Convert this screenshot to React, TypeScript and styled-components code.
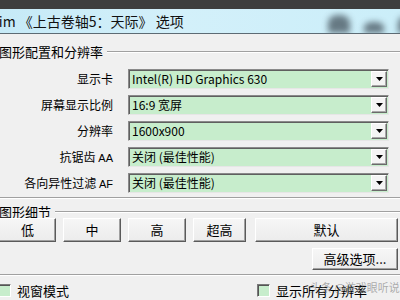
import React from 'react';
import styled, { createGlobalStyle } from 'styled-components';

const GlobalStyle = createGlobalStyle`
  html, body {
    margin: 0;
    padding: 0;
    width: 400px;
    height: 300px;
    overflow: hidden;
    background: #f0f0f0;
  }
  body {
    font-family: "Noto Sans CJK SC", "Liberation Sans", sans-serif;
    font-size: 12px;
    color: #000;
  }
`;

const EYE_GREEN = '#c7edcc';

const Page = styled.div`
  position: relative;
  width: 400px;
  height: 300px;
  overflow: hidden;
  background: #f0f0f0;
`;

const TopStrip = styled.div`
  height: 9px;
  background: #3e3e3e;
`;

const TitleBar = styled.div`
  display: flex;
  align-items: center;
  height: 24px;
  background: linear-gradient(90deg, #c6eaf7 0%, #d3f0fa 45%, #cbeef9 100%);
  border-bottom: 1px solid #5d6b74;
  overflow: hidden;
`;

const TitleText = styled.span`
  margin-left: -30px;
  font-size: 14px;
  line-height: 16px;
  white-space: nowrap;
  color: #111;
`;

const Caption = styled.div`
  display: flex;
  align-items: flex-end;
  gap: 14px;
  margin-left: auto;
  margin-right: -8px;
  height: 100%;
`;

const Blob = styled.div<{ $w: number; $h: number }>`
  width: ${p => p.$w}px;
  height: ${p => p.$h}px;
  background: #44525c;
  border-radius: 45% 45% 10% 10%;
  filter: blur(3px);
  opacity: 0.75;
`;

const Body = styled.div`
  display: flex;
  flex-direction: column;
`;

const Group = styled.section<{ $top: number }>`
  margin-top: ${p => p.$top}px;
  display: flex;
  flex-direction: column;
`;

const Legend = styled.div`
  display: flex;
  align-items: center;
  height: 12px;
`;

const LegendText = styled.span`
  margin-left: -1px;
  padding-right: 4px;
  font-size: 13px;
  line-height: 12px;
  white-space: nowrap;
`;

const EtchLine = styled.div`
  flex: 1;
  height: 0;
  border-top: 1px solid #a0a0a0;
  border-bottom: 1px solid #ffffff;
`;

const GroupBottom = styled(EtchLine)<{ $gap: number }>`
  flex: none;
  margin-top: ${p => p.$gap}px;
`;

const Rows = styled.div`
  display: flex;
  flex-direction: column;
  gap: 6px;
  padding-top: 11px;
`;

const Row = styled.div`
  display: grid;
  grid-template-columns: 113px 261px;
  column-gap: 15px;
  align-items: center;
  height: 20px;
`;

const Label = styled.span`
  text-align: right;
  white-space: nowrap;
  line-height: 14px;
`;

const Small = styled.span`
  font-family: "Liberation Sans", sans-serif;
  font-size: 11px;
`;

const Combo = styled.div`
  display: flex;
  align-items: center;
  box-sizing: border-box;
  height: 20px;
  background: ${EYE_GREEN};
  border: 1px solid;
  border-color: #8a8a8a #e6e6e6 #e6e6e6 #8a8a8a;
  box-shadow: inset 1px 1px 0 #5f5f5f;
`;

const ComboText = styled.span`
  flex: 1;
  padding-left: 3px;
  white-space: nowrap;
  line-height: 14px;
`;

const DropButton = styled.div`
  display: flex;
  align-items: center;
  justify-content: center;
  box-sizing: border-box;
  width: 16px;
  height: 16px;
  margin-right: 1px;
  background: #f4f4f4;
  border: 1px solid;
  border-color: #ffffff #6a6a6a #6a6a6a #ffffff;
  box-shadow: inset -1px -1px 0 #a8a8a8;
`;

const ButtonRow = styled.div`
  display: flex;
  gap: 7px;
  margin-left: -1px;
`;

const PushButton = styled.button<{ $w: number; $h?: number; $ml?: number }>`
  box-sizing: border-box;
  width: ${p => p.$w}px;
  height: ${p => p.$h ?? 24}px;
  margin: 0 0 0 ${p => p.$ml ?? 0}px;
  padding: 0;
  flex: none;
  font-family: "Noto Sans CJK SC", "Liberation Sans", sans-serif;
  font-size: 13px;
  line-height: 14px;
  color: #000;
  background: linear-gradient(#f6f6f6, #ececec);
  border: 1px solid;
  border-color: #ffffff #5a5a5a #5a5a5a #ffffff;
  box-shadow: inset -1px -1px 0 #a0a0a0;
`;

const RightRow = styled.div`
  display: flex;
  justify-content: flex-end;
  padding-right: 2px;
  margin-top: 6px;
`;

const CheckRow = styled.div`
  display: grid;
  grid-template-columns: 259px 1fr;
  margin-top: 7px;
  margin-left: -2px;
`;

const CheckItem = styled.label`
  display: flex;
  align-items: center;
  gap: 6px;
  height: 14px;
  font-size: 13px;
  white-space: nowrap;
`;

const CheckBox = styled.span`
  box-sizing: border-box;
  width: 13px;
  height: 13px;
  background: ${EYE_GREEN};
  border: 1px solid;
  border-color: #7a7a7a #ffffff #ffffff #7a7a7a;
  box-shadow: inset 1px 1px 0 #555555;
`;

const Watermark = styled.span`
  position: absolute;
  left: 310px;
  top: 281px;
  font-size: 11px;
  line-height: 12px;
  color: rgba(110, 110, 110, 0.55);
  white-space: nowrap;
`;

const Arrow = () => (
  <svg width="7" height="4" viewBox="0 0 7 4">
    <path d="M0 0h7L3.5 4z" fill="#000" />
  </svg>
);

const combos: { label: React.ReactNode; value: string }[] = [
  { label: '显示卡', value: 'Intel(R) HD Graphics 630' },
  { label: '屏幕显示比例', value: '16:9 宽屏' },
  { label: '分辨率', value: '1600x900' },
  { label: <>抗锯齿 <Small>AA</Small></>, value: '关闭 (最佳性能)' },
  { label: <>各向异性过滤 <Small>AF</Small></>, value: '关闭 (最佳性能)' },
];

const presets = [
  { text: '低', w: 57 },
  { text: '中', w: 58 },
  { text: '高', w: 58 },
  { text: '超高', w: 53 },
  { text: '默认', w: 143, ml: 2 },
];

export default function App() {
  return (
    <Page>
      <GlobalStyle />
      <TopStrip />
      <TitleBar>
        <TitleText>Skyrim 《上古卷轴5：天际》 选项</TitleText>
        <Caption>
          <Blob $w={22} $h={18} />
          <Blob $w={20} $h={11} />
          <Blob $w={10} $h={16} />
        </Caption>
      </TitleBar>
      <Body>
        <Group $top={12}>
          <Legend>
            <LegendText>图形配置和分辨率</LegendText>
            <EtchLine />
          </Legend>
          <Rows>
            {combos.map((c, i) => (
              <Row key={i}>
                <Label>{c.label}</Label>
                <Combo>
                  <ComboText>{c.value}</ComboText>
                  <DropButton>
                    <Arrow />
                  </DropButton>
                </Combo>
              </Row>
            ))}
          </Rows>
          <GroupBottom $gap={4} />
        </Group>
        <Group $top={7}>
          <Legend>
            <LegendText>图形细节</LegendText>
            <EtchLine />
          </Legend>
          <ButtonRow>
            {presets.map(p => (
              <PushButton key={p.text} $w={p.w} $ml={p.ml}>
                {p.text}
              </PushButton>
            ))}
          </ButtonRow>
          <RightRow>
            <PushButton $w={86} $h={22}>高级选项...</PushButton>
          </RightRow>
          <GroupBottom $gap={4} />
        </Group>
        <CheckRow>
          <CheckItem>
            <CheckBox />
            视窗模式
          </CheckItem>
          <CheckItem>
            <CheckBox />
            显示所有分辨率
          </CheckItem>
        </CheckRow>
      </Body>
      <Watermark>头条 @游戏眼听说</Watermark>
    </Page>
  );
}
